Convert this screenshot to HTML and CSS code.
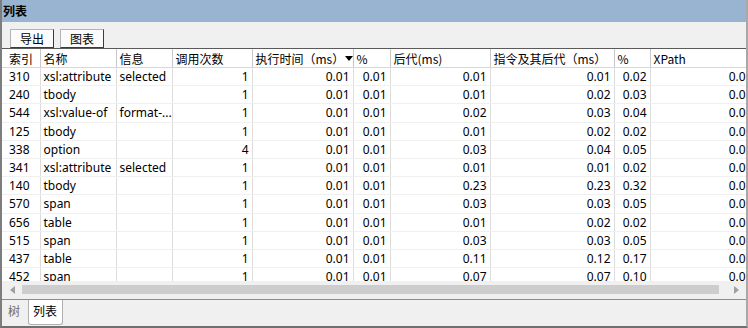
FILE: index.html
```html
<!DOCTYPE html>
<html>
<head>
<meta charset="utf-8">
<link rel="stylesheet" href="styles.css">
</head>
<body>
<div class="window">
  <div class="title">列表</div>
  <div class="toolbar">
    <button class="btn">导出</button>
    <button class="btn">图表</button>
  </div>
  <div class="grid">
    <table class="list">
      <colgroup>
        <col class="c1"><col class="c2"><col class="c3"><col class="c4"><col class="c5">
        <col class="c6"><col class="c7"><col class="c8"><col class="c9"><col class="c10">
      </colgroup>
      <thead>
        <tr>
          <th class="first">索引</th>
          <th>名称</th>
          <th>信息</th>
          <th>调用次数</th>
          <th>执行时间（ms）<svg class="sort" width="8" height="5" viewBox="0 0 8 5"><path d="M0 0H8L4 5Z" fill="#000"/></svg></th>
          <th>%</th>
          <th>后代(ms)</th>
          <th>指令及其后代（ms）</th>
          <th>%</th>
          <th>XPath</th>
        </tr>
      </thead>
      <tbody>
        <tr><td class="first">310</td><td>xsl:attribute</td><td>selected</td><td class="n">1</td><td class="n">0.01</td><td class="n">0.01</td><td class="n">0.01</td><td class="n">0.01</td><td class="n">0.02</td><td class="n">0.01</td></tr>
        <tr><td class="first">240</td><td>tbody</td><td></td><td class="n">1</td><td class="n">0.01</td><td class="n">0.01</td><td class="n">0.01</td><td class="n">0.02</td><td class="n">0.03</td><td class="n">0.01</td></tr>
        <tr><td class="first">544</td><td>xsl:value-of</td><td>format-...</td><td class="n">1</td><td class="n">0.01</td><td class="n">0.01</td><td class="n">0.02</td><td class="n">0.03</td><td class="n">0.04</td><td class="n">0.02</td></tr>
        <tr><td class="first">125</td><td>tbody</td><td></td><td class="n">1</td><td class="n">0.01</td><td class="n">0.01</td><td class="n">0.01</td><td class="n">0.02</td><td class="n">0.02</td><td class="n">0.01</td></tr>
        <tr><td class="first">338</td><td>option</td><td></td><td class="n">4</td><td class="n">0.01</td><td class="n">0.01</td><td class="n">0.03</td><td class="n">0.04</td><td class="n">0.05</td><td class="n">0.01</td></tr>
        <tr><td class="first">341</td><td>xsl:attribute</td><td>selected</td><td class="n">1</td><td class="n">0.01</td><td class="n">0.01</td><td class="n">0.01</td><td class="n">0.01</td><td class="n">0.02</td><td class="n">0.01</td></tr>
        <tr><td class="first">140</td><td>tbody</td><td></td><td class="n">1</td><td class="n">0.01</td><td class="n">0.01</td><td class="n">0.23</td><td class="n">0.23</td><td class="n">0.32</td><td class="n">0.01</td></tr>
        <tr><td class="first">570</td><td>span</td><td></td><td class="n">1</td><td class="n">0.01</td><td class="n">0.01</td><td class="n">0.03</td><td class="n">0.03</td><td class="n">0.05</td><td class="n">0.01</td></tr>
        <tr><td class="first">656</td><td>table</td><td></td><td class="n">1</td><td class="n">0.01</td><td class="n">0.01</td><td class="n">0.01</td><td class="n">0.02</td><td class="n">0.02</td><td class="n">0.01</td></tr>
        <tr><td class="first">515</td><td>span</td><td></td><td class="n">1</td><td class="n">0.01</td><td class="n">0.01</td><td class="n">0.03</td><td class="n">0.03</td><td class="n">0.05</td><td class="n">0.01</td></tr>
        <tr><td class="first">437</td><td>table</td><td></td><td class="n">1</td><td class="n">0.01</td><td class="n">0.01</td><td class="n">0.11</td><td class="n">0.12</td><td class="n">0.17</td><td class="n">0.01</td></tr>
        <tr><td class="first">452</td><td>span</td><td></td><td class="n">1</td><td class="n">0.01</td><td class="n">0.01</td><td class="n">0.07</td><td class="n">0.07</td><td class="n">0.10</td><td class="n">0.01</td></tr>
      </tbody>
    </table>
  </div>
  <div class="hscroll">
    <span class="arrow left"></span>
    <div class="track"><div class="thumb"></div></div>
    <span class="arrow right"></span>
  </div>
  <div class="tabs">
    <div class="tab">树</div>
    <div class="tab active">列表</div>
  </div>
</div>
</body>
</html>
```
FILE: styles.css
```css
html, body {
  margin: 0;
  padding: 0;
}
body {
  width: 748px;
  height: 328px;
  overflow: hidden;
  background: #f0f0f0;
  font-family: "Noto Sans", "Noto Sans CJK SC", sans-serif;
  font-size: 12px;
  color: #000;
}
.window {
  box-sizing: border-box;
  width: 748px;
  height: 328px;
  display: flex;
  flex-direction: column;
  border-left: 2px solid #7d7d7d;
  border-right: 2px solid #a8a8a8;
  border-bottom: 2px solid #707070;
}
.title {
  height: 22px;
  flex: none;
  background: #99b4d1;
  font-family: "Noto Sans CJK SC", sans-serif;
  font-weight: 700;
  font-size: 12px;
  line-height: 22px;
  padding-left: 1px;
}
.toolbar {
  height: 26px;
  flex: none;
  display: flex;
  gap: 6px;
  padding: 7px 0 0 8px;
  box-sizing: border-box;
}
.btn {
  width: 44px;
  height: 19px;
  padding: 0;
  margin: 0;
  background: #fbfbfb;
  border: 1px solid;
  border-color: #b4b4b4 #3c3c3c #3c3c3c #b4b4b4;
  font-family: "Noto Sans CJK SC", sans-serif;
  font-size: 12px;
  line-height: 16px;
  color: #000;
}
.grid {
  flex: 1 1 auto;
  min-height: 0;
  overflow: hidden;
  background: #fff;
  border-top: 1px solid #5a5a5a;
}
.list {
  table-layout: fixed;
  width: 754px;
  border-collapse: collapse;
}
.c1 { width: 38px; }
.c2 { width: 76px; }
.c3 { width: 56px; }
.c4 { width: 80px; }
.c5 { width: 101px; }
.c6 { width: 37px; }
.c7 { width: 100px; }
.c8 { width: 124px; }
.c9 { width: 36px; }
.c10 { width: 106px; }
.list th {
  height: 18px;
  padding: 0 3px;
  font-weight: 400;
  text-align: left;
  white-space: nowrap;
  overflow: hidden;
  font-family: "Noto Sans CJK SC", sans-serif;
  border-right: 1px solid #c8c8c8;
  border-bottom: 1px solid #d8d8d8;
  line-height: 17px;
}
.list th.first, .list td.first {
  padding-left: 7px;
}
.sort {
  vertical-align: 3px;
  margin-left: 1px;
}
.list td {
  height: 17.2px;
  padding: 0 3px;
  white-space: nowrap;
  overflow: hidden;
  border-right: 1px solid #dcdcdc;
  border-bottom: 1px solid #f0f0f0;
  line-height: 17px;
}
.list td.n {
  text-align: right;
}
.hscroll {
  height: 17px;
  flex: none;
  display: flex;
  align-items: center;
  background: #f0f0f0;
  border-bottom: 1px solid #8c8c8c;
  padding-bottom: 1px;
}
.arrow {
  width: 20px;
  height: 17px;
  display: flex;
  align-items: center;
  justify-content: center;
  flex: none;
}
.arrow.left::before {
  content: "";
  border-style: solid;
  border-width: 4px 5px 4px 0;
  border-color: transparent #a0a0a0 transparent transparent;
}
.arrow.right::before {
  content: "";
  border-style: solid;
  border-width: 4px 0 4px 5px;
  border-color: transparent transparent transparent #a0a0a0;
}
.track {
  flex: 1;
  height: 17px;
  display: flex;
  align-items: center;
  padding-right: 7px;
}
.thumb {
  flex: 1;
  height: 9px;
  background: #cdcdcd;
}
.tabs {
  height: 26px;
  flex: none;
  display: flex;
  align-items: flex-start;
  padding-left: 0;
}
.tab {
  height: 24px;
  line-height: 22px;
  padding: 0 6px;
  font-family: "Noto Sans CJK SC", sans-serif;
  color: #6d6d6d;
  font-size: 12px;
}
.tab.active {
  background: #fff;
  color: #000;
  border: 1px solid #b0b0b0;
  border-top: none;
  border-radius: 0 0 3px 3px;
  padding: 0 5px 0 4px;
  margin-left: 2px;
}
```
